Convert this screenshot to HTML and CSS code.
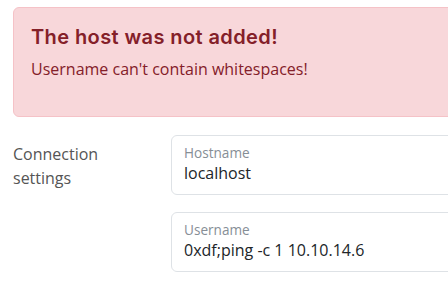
FILE: index.html
```html
<!DOCTYPE html>
<html>
<head>
<meta charset="utf-8">
<link rel="stylesheet" href="styles.css">
</head>
<body>
<div class="page">
  <div class="alert">
    <h4 class="alert-heading">The host was not added!</h4>
    <p class="alert-text">Username can't contain whitespaces!</p>
  </div>
  <div class="form-row">
    <div class="form-label">Connection<br>settings</div>
    <div class="fields">
      <div class="floating">
        <span class="floating-label">Hostname</span>
        <span class="floating-value">localhost</span>
      </div>
      <div class="floating">
        <span class="floating-label">Username</span>
        <span class="floating-value">0xdf;ping -c 1 10.10.14.6</span>
      </div>
    </div>
  </div>
</div>
</body>
</html>
```
FILE: styles.css
```css
html, body {
  margin: 0;
  padding: 0;
  background: #fff;
  overflow: hidden;
}
body {
  font-family: "Open Sans", "Liberation Sans", sans-serif;
  font-size: 16px;
  line-height: 1.5;
  color: #212529;
}
.page {
  width: 640px;
  padding: 7px 0 0 13px;
}
.alert {
  box-sizing: border-box;
  background: #f8d7da;
  border: 1px solid #f5c2c7;
  border-radius: 6px;
  color: #842029;
  padding: 17px 17px;
  height: 110px;
  margin-bottom: 18px;
}
.alert-heading {
  margin: 0 0 8px;
  font-family: "Inter", "Open Sans", sans-serif;
  font-weight: 600;
  font-size: 20px;
  letter-spacing: 0.4px;
  line-height: 24px;
  color: #842029;
}
.alert-text {
  margin: 0;
  font-size: 16px;
  line-height: 24px;
}
.form-row {
  display: flex;
}
.form-label {
  width: 158px;
  padding-top: 7px;
  color: #555;
  font-size: 16px;
  line-height: 24px;
}
.fields {
  flex: 1;
  display: flex;
  flex-direction: column;
  gap: 17px;
}
.floating {
  box-sizing: border-box;
  height: 60px;
  border: 1px solid #dee2e6;
  border-radius: 6px;
  padding: 8px 12px 0;
  display: flex;
  flex-direction: column;
}
.floating-label {
  font-size: 13.6px;
  line-height: 18px;
  color: #868e96;
}
.floating-value {
  font-size: 16px;
  line-height: 22px;
  color: #212529;
}
```
